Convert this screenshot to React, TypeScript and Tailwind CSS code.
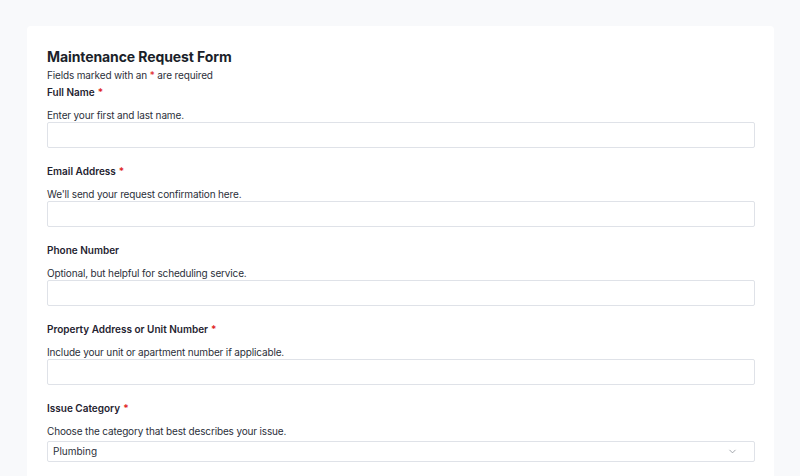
import { ChevronDown } from 'lucide-react';

interface FieldProps {
  label: string;
  hint: string;
  required?: boolean;
  children?: React.ReactNode;
}

function Field({ label, hint, required, children }: FieldProps) {
  return (
    <div className="flex flex-col">
      <label className="text-[10px] font-semibold text-[#1f2330] leading-[14px]">
        {label}
        {required && <span className="text-[#e02424] ml-[3px]">*</span>}
      </label>
      <p className="mt-[10px] text-[10px] text-[#2b2f3a] leading-[12px] tracking-[-0.15px]">{hint}</p>
      <div className="mt-0">
        {children ?? (
          <input
            type="text"
            className="w-full h-[26px] border border-[#dfe2e8] rounded-[2px] px-2 text-[10px] focus:outline-none"
          />
        )}
      </div>
    </div>
  );
}

export default function App() {
  return (
    <div
      className="min-h-screen bg-[#f8f9fb] pt-[26px] pl-[27px] pr-[26px]"
      style={{ fontFamily: 'Inter, "Noto Sans", sans-serif' }}
    >
      <div className="bg-white rounded-[4px] pl-[20px] pr-[19px] pt-[21px] pb-8">
        <h1 className="text-[14px] font-bold text-[#1b1f2a] leading-[20px] tracking-[-0.1px]">
          Maintenance Request Form
        </h1>
        <p className="mt-[1px] text-[10px] text-[#2b2f3a] leading-[14px] tracking-[-0.15px]">
          Fields marked with an <span className="text-[#e02424]">*</span> are required
        </p>

        <div className="mt-[3px] flex flex-col gap-[16px]">
          <Field label="Full Name" hint="Enter your first and last name." required />
          <Field label="Email Address" hint="We'll send your request confirmation here." required />
          <Field label="Phone Number" hint="Optional, but helpful for scheduling service." />
          <Field
            label="Property Address or Unit Number"
            hint="Include your unit or apartment number if applicable."
            required
          />
          <Field label="Issue Category" hint="Choose the category that best describes your issue." required>
            <div className="relative mt-[4px] h-[21px] border border-[#dfe2e8] rounded-[2px] flex items-center px-[5px]">
              <span className="text-[10px] text-[#2b2f3a]">Plumbing</span>
              <ChevronDown className="absolute right-[16px] w-[11px] h-[11px] text-[#8f949c]" strokeWidth={1.8} />
            </div>
          </Field>
        </div>
      </div>
    </div>
  );
}
